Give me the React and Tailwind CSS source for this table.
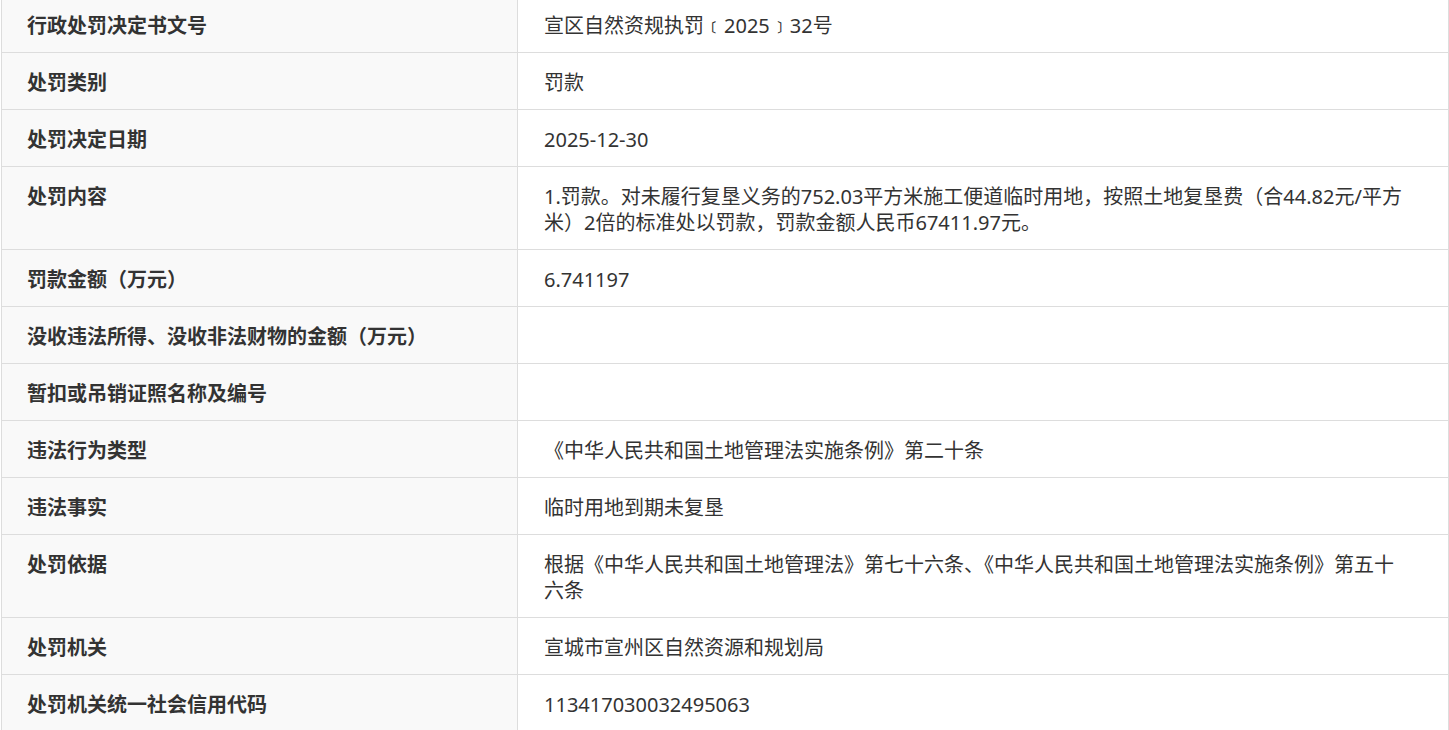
const ROWS = [
  ['行政处罚决定书文号', '宣区自然资规执罚﹝2025﹞32号'],
  ['处罚类别', '罚款'],
  ['处罚决定日期', '2025-12-30'],
  ['处罚内容', '1.罚款。对未履行复垦义务的752.03平方米施工便道临时用地，按照土地复垦费（合44.82元/平方米）2倍的标准处以罚款，罚款金额人民币67411.97元。'],
  ['罚款金额（万元）', '6.741197'],
  ['没收违法所得、没收非法财物的金额（万元）', ''],
  ['暂扣或吊销证照名称及编号', ''],
  ['违法行为类型', '《中华人民共和国土地管理法实施条例》第二十条'],
  ['违法事实', '临时用地到期未复垦'],
  ['处罚依据', '根据《中华人民共和国土地管理法》第七十六条、《中华人民共和国土地管理法实施条例》第五十六条'],
  ['处罚机关', '宣城市宣州区自然资源和规划局'],
  ['处罚机关统一社会信用代码', '113417030032495063'],
];

export default function App() {
  return (
    <div
      className="h-[730px] overflow-hidden bg-white text-[#333] text-[20px] leading-[26px]"
      style={{ fontFamily: '"Noto Sans", "Noto Sans CJK SC", sans-serif' }}
    >
      <div className="ml-px -mt-[4px] w-[1448px] border-x border-[#ddd]">
        {ROWS.map(([label, value]) => (
          <div key={label} className="flex border-b border-[#ddd]">
            <div className="w-[516px] shrink-0 border-r border-[#ddd] bg-[#f9f9f9] pl-[25px] pr-[25px] pt-[17px] pb-[13px] font-bold">
              {label}
            </div>
            <div className="flex-1 min-w-0 pl-[26px] pr-[39px] pt-[17px] pb-[13px]">
              {value || '\u00a0'}
            </div>
          </div>
        ))}
      </div>
    </div>
  );
}
